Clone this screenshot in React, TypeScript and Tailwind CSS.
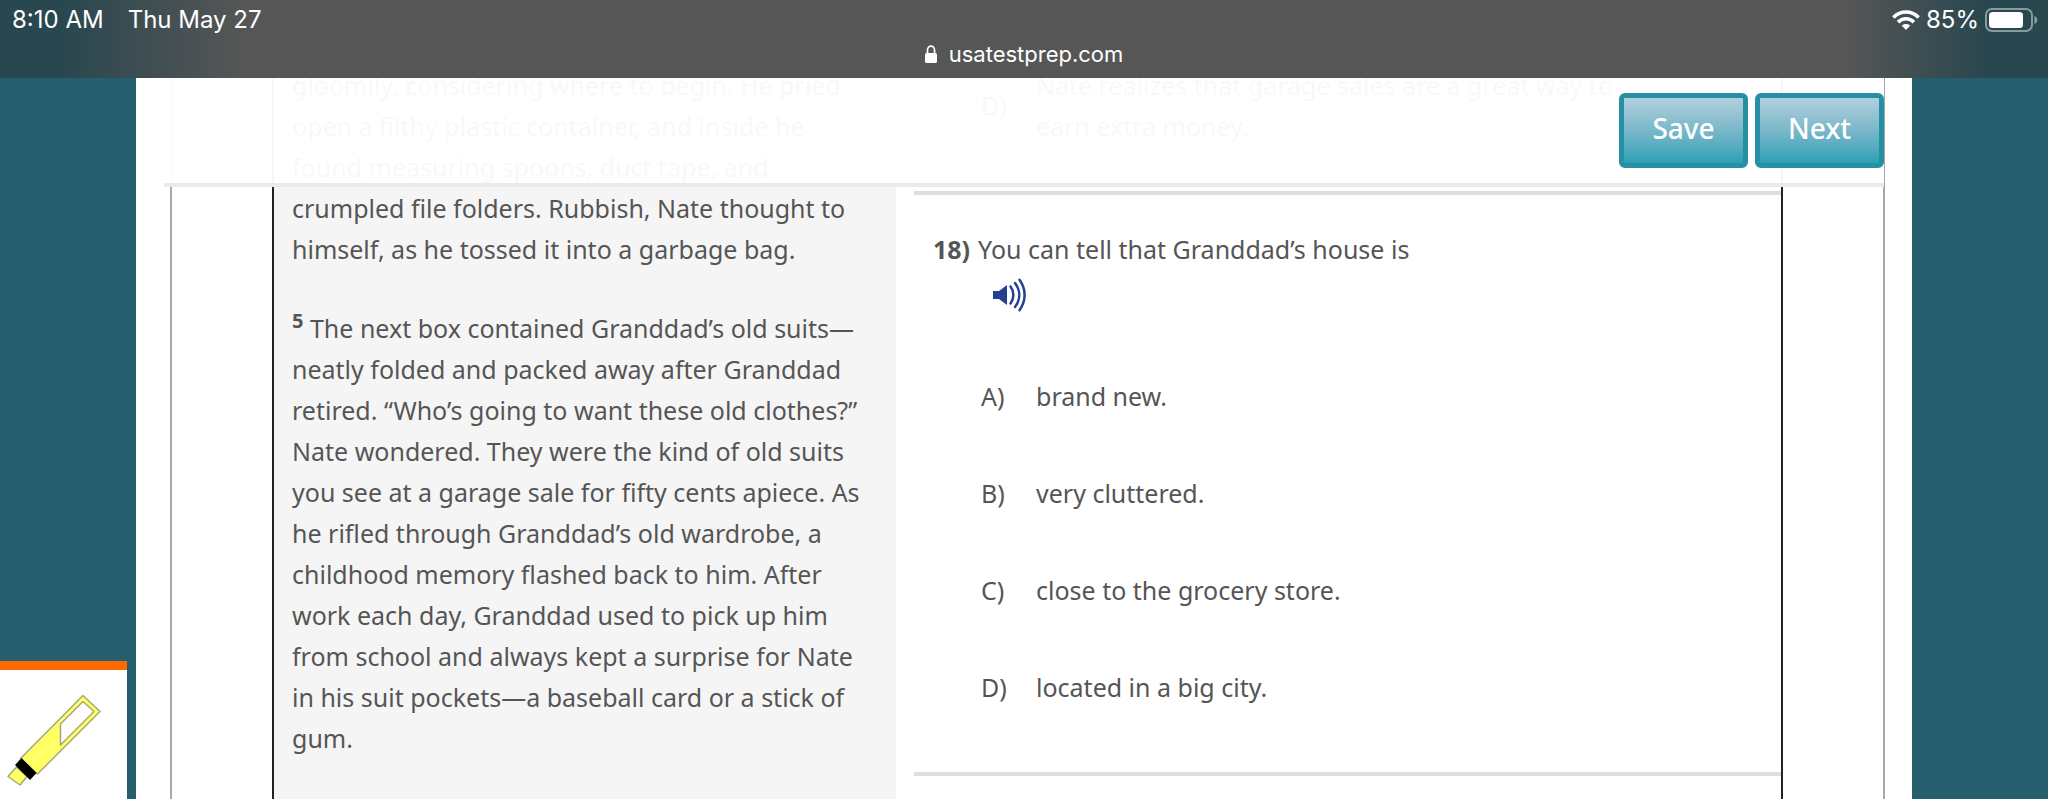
import type { ReactNode } from 'react'

interface Choice {
  letter: string
  text: string
}

const CHOICES: Choice[] = [
  { letter: 'A', text: 'brand new.' },
  { letter: 'B', text: 'very cluttered.' },
  { letter: 'C', text: 'close to the grocery store.' },
  { letter: 'D', text: 'located in a big city.' },
]

function WifiIcon() {
  return (
    <svg viewBox="0 0 28 20" className="h-5 w-7" aria-hidden="true">
      <g fill="none" stroke="#fff" strokeWidth="3.6">
        <path d="M1.4 7.4C8.5.2 19.5.2 26.6 7.4" />
        <path d="M6 12.1c4.6-4.4 11.4-4.4 16 0" />
      </g>
      <path d="M14 20l-4.3-4.4c2.4-2.1 6.2-2.1 8.6 0z" fill="#fff" />
    </svg>
  )
}

function BatteryIcon() {
  return (
    <svg viewBox="0 0 53 24" className="h-6 w-[53px]" aria-hidden="true">
      <rect x="1" y="1" width="46" height="22" rx="6" fill="none" stroke="#fff" strokeOpacity=".45" strokeWidth="2" />
      <rect x="4" y="4" width="34" height="16" rx="3.5" fill="#fff" />
      <path d="M49.5 8c3.6 1.4 3.6 6.6 0 8z" fill="#fff" fillOpacity=".5" />
    </svg>
  )
}

function LockIcon() {
  return (
    <svg viewBox="0 0 12 18" className="h-[18px] w-3" aria-hidden="true">
      <rect y="8" width="12" height="10" rx="1.5" fill="#fff" />
      <path d="M2.5 9V5a3.5 3.9 0 0 1 7 0v4" fill="none" stroke="#fff" strokeWidth="1.7" />
    </svg>
  )
}

function SpeakerIcon() {
  return (
    <svg viewBox="0 0 35 34" className="h-[34px] w-[35px]" aria-hidden="true">
      <path d="M1 13h6l8-6v20l-8-6H1z" fill="#263f8f" />
      <g fill="none" stroke="#263f8f" strokeWidth="2.5" strokeLinecap="round">
        <path d="M18.5 8.5c3.8 5 3.8 12 0 17" />
        <path d="M23 5c5.6 7.5 5.6 16.5 0 24" />
        <path d="M27.5 1.8c6.8 9.5 6.8 20.9 0 30.4" />
      </g>
    </svg>
  )
}

function HighlighterIcon() {
  return (
    <svg viewBox="0 0 110 110" className="h-[110px] w-[110px]" aria-hidden="true">
      <g stroke="#a9a77c" strokeWidth="1.5" strokeLinejoin="round">
        <path d="M8 91.5L16.5 82l10.5 9.5-7 8.5z" fill="#ffff66" />
        <path d="M83 10.5L100 26.5 37.5 89 20.5 73.5z" fill="#ffff66" />
        <path d="M83 16.5L94 26.5 60.5 60V39z" fill="#fff" />
      </g>
      <path d="M21.5 73L36.5 88 30 95 15 80z" fill="#000" />
    </svg>
  )
}

function TopButton({ children }: { children: ReactNode }) {
  return (
    <button
      type="button"
      className="h-[75px] w-[129px] rounded-md border-5 border-[#258fa3] bg-linear-to-b from-[#b3cfdd] to-[#27a0b6] pb-1 text-[28px] font-medium text-white"
    >
      {children}
    </button>
  )
}

function StatusBar() {
  return (
    <header className="h-[78px] shrink-0 bg-linear-to-r from-[#29474f] from-3% via-[#565656] via-12% to-[#565656] text-white font-['Inter',sans-serif]">
      <div className="h-full bg-linear-to-l from-[#29474f] from-3% to-transparent to-10%">
        <div className="flex h-10 items-center justify-between pr-[10px] pl-3 text-2xl">
          <div className="flex gap-6">
            <span>8:10 AM</span>
            <span>Thu May 27</span>
          </div>
          <div className="flex items-center gap-[6px]">
            <WifiIcon />
            <span>85%</span>
            <BatteryIcon />
          </div>
        </div>
        <div className="flex h-7 items-center justify-center gap-3 text-[22px]">
          <LockIcon />
          <span>usatestprep.com</span>
        </div>
      </div>
    </header>
  )
}

function Passage() {
  return (
    <article className="bg-[#f5f5f5] pl-[18px]">
      <p className="-mt-[13px]">
        gloomily, considering where to begin. He pried<br />
        open a filthy plastic container, and inside he<br />
        found measuring spoons, duct tape, and<br />
        crumpled file folders. Rubbish, Nate thought to<br />
        himself, as he tossed it into a garbage bag.
      </p>
      <p className="mt-[38px]">
        <sup className="text-xl font-bold">5</sup> The next box contained Granddad’s old suits—<br />
        neatly folded and packed away after Granddad<br />
        retired. “Who’s going to want these old clothes?”<br />
        Nate wondered. They were the kind of old suits<br />
        you see at a garage sale for fifty cents apiece. As<br />
        he rifled through Granddad’s old wardrobe, a<br />
        childhood memory flashed back to him. After<br />
        work each day, Granddad used to pick up him<br />
        from school and always kept a surprise for Nate<br />
        in his suit pockets—a baseball card or a stick of<br />
        gum.
      </p>
    </article>
  )
}

function Questions() {
  return (
    <section className="pl-[18px]">
      <div className="-mt-[13px] flex h-[126px] items-start pl-[67px]">
        <span className="w-[55px] pt-5">D)</span>
        <p>
          Nate realizes that garage sales are a great way to<br />
          earn extra money.
        </p>
      </div>
      <fieldset className="border-y-4 border-[#dedede]">
        <div className="flex gap-2 pt-[34px] pl-[19px]">
          <span className="font-bold">18)</span>
          <p>You can tell that Granddad’s house is</p>
        </div>
        <button type="button" aria-label="Read aloud" className="mt-2 ml-[78px] block">
          <SpeakerIcon />
        </button>
        <div className="my-16 flex flex-col gap-14 pl-[67px]">
          {CHOICES.map((c) => (
            <label key={c.letter} className="flex cursor-pointer">
              <input type="radio" name="question-18" value={c.letter} className="sr-only" />
              <span className="w-[55px]">{c.letter})</span>
              <span>{c.text}</span>
            </label>
          ))}
        </div>
      </fieldset>
    </section>
  )
}

export default function App() {
  return (
    <div className="flex h-screen flex-col overflow-hidden bg-[#255f6d]">
      <StatusBar />
      <div className="flex min-h-0 flex-1 font-['Noto_Sans',sans-serif] text-[25px] leading-[41px] text-[#555]">
        <aside className="flex w-[136px] shrink-0 flex-col justify-end">
          <button type="button" aria-label="Highlighter" className="h-[138px] w-[127px] border-t-9 border-[#ff6a00] bg-white pt-[10px]">
            <HighlighterIcon />
          </button>
        </aside>

        <main className="relative flex-1 overflow-hidden bg-white pr-[27px] pl-[34px]">
          <div className="h-full border-x-2 border-[#a8a8a8] px-[100px]">
            <div className="grid h-full grid-cols-[622px_1fr] border-x-2 border-[#222]">
              <Passage />
              <Questions />
            </div>
          </div>

          {/* toolbar stays over the scrolled page, which shows faintly through it */}
          <div className="absolute inset-x-7 top-0 flex h-[109px] justify-end gap-[7px] border-b-4 border-[#eaeaea] bg-white/96 pt-[15px]">
            <TopButton>Save</TopButton>
            <TopButton>Next</TopButton>
          </div>
        </main>

        <aside className="w-[136px] shrink-0" />
      </div>
    </div>
  )
}
